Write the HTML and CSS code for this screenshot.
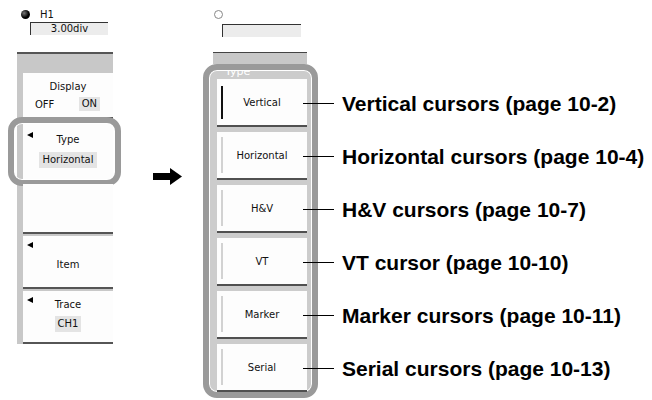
FILE: index.html
```html
<!DOCTYPE html>
<html lang="en">
<head>
  <meta charset="UTF-8">
  <title>Cursor Type</title>
  <link rel="stylesheet" href="styles.css">
</head>
<body>
  <div class="figure">

    <!-- menu before: Type = Horizontal -->
    <div class="panel panel-left">
      <div class="knob-area">
        <div class="knob-row">
          <span class="knob"></span>
          <span class="knob-label">H1</span>
        </div>
        <div class="value-box">3.00div</div>
      </div>
      <div class="stack">
        <div class="sec sec-display">
          <div class="sec-title">Display</div>
          <div class="onoff"><span>OFF</span><span class="sel">ON</span></div>
        </div>
        <div class="sec sec-type">
          <span class="tri"></span>
          <div class="sec-title">Type</div>
          <div class="sec-value"><span class="sel">Horizontal</span></div>
          <div class="ring ring-left"></div>
        </div>
        <div class="sec sec-empty"></div>
        <div class="sec sec-item">
          <span class="tri"></span>
          <div class="sec-title">Item</div>
        </div>
        <div class="sec sec-trace">
          <span class="tri"></span>
          <div class="sec-title">Trace</div>
          <div class="sec-value"><span class="sel">CH1</span></div>
        </div>
      </div>
    </div>

    <svg class="arrow" width="29" height="17" viewBox="0 0 29 17">
      <rect x="0" y="5" width="18" height="7" fill="#000"/>
      <polygon points="17,0 29,8.5 17,17" fill="#000"/>
    </svg>

    <!-- menu after: type selection list -->
    <div class="panel panel-right">
      <div class="knob-area">
        <div class="knob-row">
          <span class="knob knob-off"></span>
        </div>
        <div class="value-box value-box-right"></div>
      </div>
      <div class="band"></div>
      <div class="ring-box">
        <div class="type-label"><span>Type</span></div>
        <div class="menu">
          <div class="row">
            <div class="btn selected"><span class="bar"></span><span class="btn-label">Vertical</span></div>
            <div class="callout"><span class="callout-line"></span><span class="callout-text">Vertical cursors (page 10-2)</span></div>
          </div>
          <div class="row">
            <div class="btn"><span class="bar"></span><span class="btn-label">Horizontal</span></div>
            <div class="callout"><span class="callout-line"></span><span class="callout-text">Horizontal cursors (page 10-4)</span></div>
          </div>
          <div class="row">
            <div class="btn"><span class="bar"></span><span class="btn-label">H&amp;V</span></div>
            <div class="callout"><span class="callout-line"></span><span class="callout-text">H&amp;V cursors (page 10-7)</span></div>
          </div>
          <div class="row">
            <div class="btn"><span class="bar"></span><span class="btn-label">VT</span></div>
            <div class="callout"><span class="callout-line"></span><span class="callout-text">VT cursor (page 10-10)</span></div>
          </div>
          <div class="row">
            <div class="btn"><span class="bar"></span><span class="btn-label">Marker</span></div>
            <div class="callout"><span class="callout-line"></span><span class="callout-text">Marker cursors (page 10-11)</span></div>
          </div>
          <div class="row">
            <div class="btn"><span class="bar"></span><span class="btn-label">Serial</span></div>
            <div class="callout"><span class="callout-line"></span><span class="callout-text">Serial cursors (page 10-13)</span></div>
          </div>
        </div>
      </div>
    </div>

  </div>
</body>
</html>
```

FILE: styles.css
```css
html, body {
  margin: 0;
  overflow: hidden;
}

body {
  font-family: "DejaVu Sans", sans-serif;
  font-size: 10px;
  color: #111;
  background: #fff;
}

.figure {
  display: flex;
  align-items: flex-start;
}

/* panels */
.panel {
  flex: none;
}

.panel-left {
  width: 96px;
  margin-left: 17px;
}

.arrow {
  flex: none;
  margin: 168px 0 0 40px;
}

.panel-right {
  width: 94px;
  margin-left: 31px;
}

.knob-area {
  height: 52px;
  padding-top: 10px;
  box-sizing: border-box;
}

.knob-row {
  display: flex;
  align-items: center;
  height: 9px;
}

.knob {
  width: 9px;
  height: 9px;
  margin-left: 4px;
  border-radius: 50%;
  background: radial-gradient(circle at 35% 35%, #777 0, #000 55%);
}

.knob-off {
  width: 7px;
  height: 7px;
  margin-left: 1px;
  background: #fff;
  border: 1px solid #888;
}

.knob-label {
  margin-left: 10px;
  line-height: 10px;
}

.value-box {
  width: 78px;
  height: 13px;
  margin: 3px 0 0 13px;
  box-sizing: border-box;
  border-top: 1px solid #333;
  border-left: 1px solid #333;
  background: #ececec;
  line-height: 12px;
  text-align: center;
}

.value-box-right {
  width: 79px;
  margin: 5px 0 0 9px;
}

.panel-right .knob-area {
  height: 53px;
  border-bottom: 1px solid #444;
}

.band {
  height: 11px;
  background: #c8c8c8;
}

/* left menu sections */
.stack {
  border-top: 2px solid #555;
  background: #c8c8c8;
  padding: 19px 0 0 6px;
}

.sec {
  position: relative;
  background: #fdfdfd;
  border-bottom: 2px solid #555;
  margin-bottom: 2px;
  text-align: center;
}

.sec:last-child {
  margin-bottom: 0;
}

.sec-title {
  line-height: 12px;
}

.sel {
  display: inline-block;
  background: #e4e4e4;
  padding: 2px 3px;
  line-height: 12px;
}

.tri {
  position: absolute;
  left: 4px;
  top: 6px;
  width: 0;
  height: 0;
  border-top: 3.5px solid transparent;
  border-bottom: 3.5px solid transparent;
  border-right: 6px solid #000;
}

.sec-display {
  height: 36px;
  padding-top: 8px;
}

.onoff {
  display: flex;
  justify-content: space-between;
  align-items: center;
  margin-top: 4px;
  padding: 0 13px 0 12px;
}

.onoff .sel {
  padding: 1px 3px;
}

.sec-type {
  height: 46px;
  padding-top: 13px;
}

.sec-type .tri {
  top: 11px;
}

.sec-value {
  margin-top: 6px;
}

.sec-empty {
  height: 48px;
}

.sec-item {
  height: 28px;
  padding-top: 23px;
}

.sec-trace {
  height: 43px;
  padding-top: 8px;
}

.sec-trace .sec-value {
  margin-top: 5px;
}

/* highlight rings */
.ring {
  position: absolute;
  left: -15px;
  right: -8px;
  top: -4px;
  bottom: -6px;
  border: 6px solid #9a9a9a;
  border-radius: 14px;
  box-shadow: inset 0 0 0 1px #fff;
  pointer-events: none;
}

.ring-box {
  margin: 0 -11px 0 -10px;
  padding: 0 5px 0 8px;
  border: 6px solid #9a9a9a;
  border-radius: 14px;
  background: #cccccc;
  box-shadow: inset 0 0 0 1px #fff;
}

.type-label {
  height: 9px;
  overflow: hidden;
  padding-left: 8px;
}

.type-label span {
  display: block;
  margin-top: -5px;
  font-size: 11px;
  line-height: 14px;
  color: #fff;
}

/* type buttons */
.menu {
  display: flex;
  flex-direction: column;
  gap: 5px;
}

.row {
  display: flex;
  align-items: center;
  height: 48px;
}

.btn {
  flex: none;
  display: flex;
  width: 90px;
  height: 46px;
  background: #fdfdfd;
  border-bottom: 2px solid #505050;
}

.bar {
  width: 2px;
  margin: 5px 0 5px 4px;
  background: #d2d2d2;
}

.selected .bar {
  margin: 7px 0 6px 4px;
  background: #111;
}

.btn-label {
  flex: 1;
  align-self: center;
  text-align: center;
  padding-right: 6px;
}

/* callouts */
.callout {
  flex: none;
  display: flex;
  align-items: center;
  margin-left: -4px;
  white-space: nowrap;
}

.callout-line {
  width: 31px;
  height: 1px;
  background: #000;
}

.callout-text {
  margin-left: 8px;
  font-family: "Liberation Sans", Arial, sans-serif;
  font-weight: bold;
  font-size: 21px;
  line-height: 1;
  color: #000;
}
```
